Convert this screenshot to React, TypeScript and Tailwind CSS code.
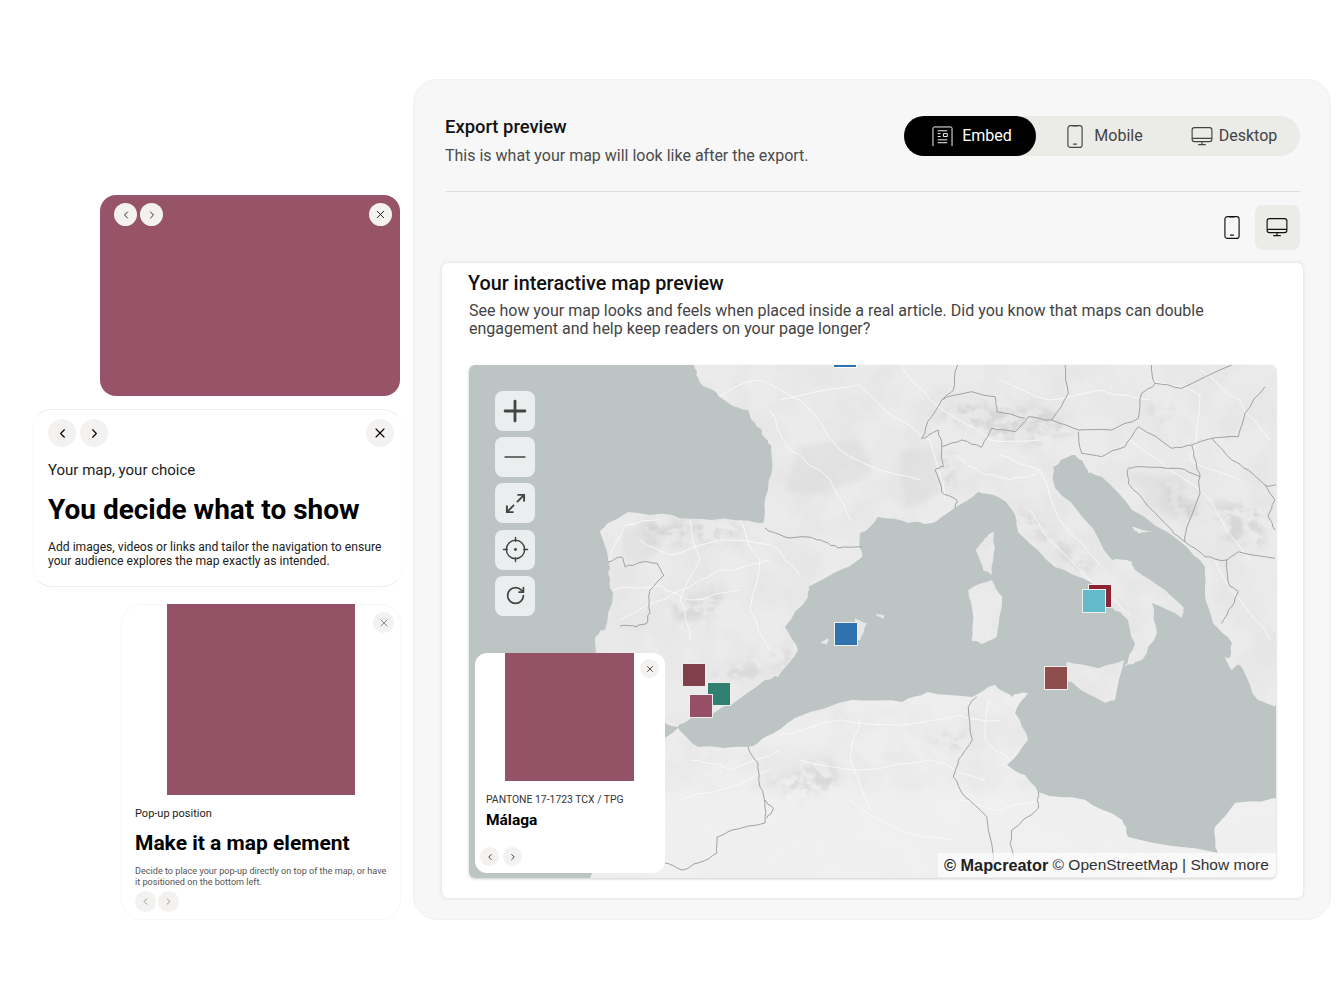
import { ChevronLeft, ChevronRight, X, Plus, Minus, RotateCw } from "lucide-react";

type Pt = [number, number];

// fixed seed so the coast comes out the same every time
function makeRand(seed: number) {
  let s = seed;
  return () => {
    s = (s * 16807) % 2147483647;
    return s / 2147483647 - 0.5;
  };
}

// break each segment up and nudge the new points, gives a natural edge
function rough(pts: Pt[], amp: number, closed: boolean, seed: number) {
  const rand = makeRand(seed);
  let cur = pts;
  for (let pass = 0; pass < 2; pass++) {
    const next: Pt[] = [];
    const n = closed ? cur.length : cur.length - 1;
    for (let i = 0; i < n; i++) {
      const a = cur[i];
      const b = cur[(i + 1) % cur.length];
      next.push(a);
      next.push([(a[0] + b[0]) / 2 + rand() * amp * 2, (a[1] + b[1]) / 2 + rand() * amp * 2]);
    }
    if (!closed) next.push(cur[cur.length - 1]);
    cur = next;
  }
  return cur;
}

function path(pts: Pt[], closed: boolean) {
  const f = (n: number) => n.toFixed(1);
  return `M${pts.map((p) => `${f(p[0])} ${f(p[1])}`).join("L")}${closed ? "Z" : ""}`;
}

const shape = (pts: Pt[], amp = 1.3, seed = 11) => path(rough(pts, amp, true, seed), true);
const stroke = (pts: Pt[], amp = 1.1, seed = 29) => path(rough(pts, amp, false, seed), false);

// z = points read in 3x crop starting at 765,360
const z = (pts: Pt[]): Pt[] => pts.map(([x, y]) => [765 + x / 3, 360 + y / 3]);

const europe: Pt[] = [
  [692, 360], [694, 365], [698, 377], [705, 387], [716, 392], [728, 403], [748, 410], [755, 423], [765, 438],
  [771, 445], [772, 470], [768, 490], [764, 520], [758, 523], [712, 520], [672, 515], [628, 512], [608, 523], [600, 532],
  [608, 557], [608, 573], [613, 593], [605, 630], [595, 640], [595, 660], [620, 700], [665, 723], [678, 727],
  [691, 718], [710, 715], [731, 705], [765, 680], [778, 677], [798, 650], [785, 627], [808, 597], [808, 587],
  [862, 557], [860, 533], [878, 517], [908, 523], [932, 523], [952, 510], [978, 492], [998, 497], [1012, 510],
  [1018, 532], [1055, 567], [1092, 583], [1112, 607], [1128, 620], [1135, 643], [1128, 660], [1122, 668],
  [1142, 660], [1157, 633], [1152, 603], [1182, 618], [1184, 608], [1165, 590], [1135, 570], [1132, 562],
  [1112, 560], [1085, 520], [1055, 488], [1053, 467], [1072, 455], [1082, 460], [1088, 473], [1102, 477],
  [1132, 510], [1182, 543], [1205, 567], [1205, 593], [1213, 623], [1232, 643], [1228, 660], [1242, 667],
  [1258, 700], [1285, 708], [1285, 360],
];
const africa: Pt[] = [
  [678, 728], [698, 747], [748, 747], [765, 737], [795, 718], [852, 700], [902, 702], [928, 692], [972, 697],
  [995, 685], [1012, 697], [1028, 693], [1015, 713], [1028, 740], [1007, 765], [1025, 775], [1038, 792],
  [1085, 800], [1122, 820], [1128, 837], [1218, 853], [1215, 827], [1235, 803], [1285, 798], [1285, 885],
  [585, 885], [590, 878], [620, 800], [650, 745],
];
const islands: Pt[][] = [
  z([[685, 515], [690, 560], [680, 645], [655, 630], [632, 570], [660, 535]]),
  z([[610, 690], [680, 660], [712, 710], [695, 830], [650, 852], [620, 840], [625, 770]]),
  z([[905, 905], [1000, 925], [1078, 900], [1050, 1020], [1020, 1028], [930, 975], [905, 960]]),
  z([[270, 775], [305, 790], [285, 840], [270, 840]]),
  z([[333, 760], [360, 768], [355, 778], [340, 770]]),
  z([[168, 850], [190, 835], [188, 855]]),
  z([[1380, 890], [1430, 900], [1400, 930]]),
  z([[1430, 920], [1530, 900], [1530, 1040], [1480, 1020]]),
  z([[1100, 500], [1170, 515], [1120, 520]]),
];

const borders: Pt[][] = [
  [[765, 528], [785, 537], [808, 537], [825, 542], [838, 548], [862, 547]],
  [[608, 562], [622, 557], [625, 567], [642, 562], [657, 563], [664, 575], [650, 590], [650, 613], [647, 623], [637, 627], [620, 626]],
  z([[578, 15], [565, 90], [530, 120], [500, 170], [470, 235]]),
  z([[470, 235], [520, 210], [530, 260], [590, 240], [650, 262], [680, 205], [750, 215], [790, 170], [860, 180], [940, 210], [1040, 210], [1120, 175], [1130, 100], [1170, 70], [1250, 85], [1400, 15]]),
  z([[530, 260], [535, 320], [510, 330], [530, 395], [575, 420], [570, 445]]),
  z([[530, 120], [620, 95], [690, 110], [695, 155], [780, 175]]),
  z([[940, 215], [950, 280], [1010, 290], [1080, 260], [1120, 200], [1220, 265], [1280, 255], [1295, 320], [1305, 350], [1240, 325], [1130, 320], [1090, 325], [1090, 370], [1150, 440], [1220, 510], [1260, 545]]),
  z([[1280, 255], [1340, 235], [1400, 300], [1450, 330], [1500, 375], [1535, 375]]),
  z([[1305, 350], [1305, 400], [1270, 490], [1260, 545], [1320, 590], [1385, 600], [1395, 680], [1420, 695], [1400, 740], [1370, 790]]),
  z([[1385, 600], [1420, 575], [1530, 595]]),
  z([[1160, 15], [1170, 70]]),
  z([[900, 15], [910, 100], [860, 180]]),
  z([[1500, 80], [1440, 160], [1420, 230], [1340, 235]]),
  z([[1500, 375], [1530, 420], [1510, 470], [1530, 510]]),
  z([[635, 1010], [610, 1040], [622, 1140], [580, 1200], [565, 1250], [600, 1310], [665, 1370], [690, 1530]]),
  z([[820, 1295], [820, 1345], [740, 1410], [735, 1450], [745, 1490]]),
  z([[0, 1320], [25, 1345], [5, 1375]]),
  [[748, 747], [758, 763], [760, 787], [765, 803], [765, 823], [732, 830], [717, 837], [717, 853], [698, 863], [682, 870], [665, 863]],
];

const roads: Pt[][] = [
  [[620, 620], [680, 590], [720, 570], [770, 560]],
  [[640, 540], [670, 555], [720, 540], [770, 545], [800, 575]],
  [[613, 590], [660, 585], [690, 600], [740, 590]],
  [[610, 560], [625, 525], [660, 520]],
  [[690, 520], [700, 560], [680, 600], [690, 640]],
  [[740, 520], [760, 560], [750, 610], [770, 650]],
  [[710, 400], [760, 380], [800, 400], [840, 450], [880, 470], [920, 480]],
  [[780, 400], [860, 385], [900, 420], [930, 440], [945, 500]],
  [[770, 410], [790, 450], [830, 480], [850, 520]],
  [[900, 365], [930, 400], [990, 440], [1040, 440]],
  [[955, 455], [985, 475], [1010, 480], [1040, 470]],
  [[1000, 455], [1040, 470], [1060, 520], [1100, 565]],
  [[1030, 510], [1060, 550], [1100, 590], [1130, 615]],
  [[1150, 380], [1200, 395], [1190, 460], [1240, 480]],
  [[1130, 440], [1170, 470], [1210, 500], [1250, 560]],
  [[1200, 370], [1240, 400], [1270, 440]],
  [[1215, 560], [1240, 600], [1270, 640]],
  [[1000, 380], [1050, 400], [1100, 390], [1150, 400]],
  [[780, 735], [840, 720], [900, 725], [960, 715], [1000, 720]],
  [[800, 760], [860, 770], [930, 760], [985, 780]],
  [[850, 800], [900, 830], [950, 840]],
  [[690, 760], [730, 770], [780, 750]],
  [[680, 800], [720, 790], [770, 770]],
  [[860, 720], [850, 760], [870, 810]],
  [[990, 700], [985, 740], [1010, 760]],
  [[960, 800], [1000, 810], [1040, 800]],
];

// soft relief shading, only the mountain parts
const mountains: Pt[][] = [
  z([[500, 170], [590, 190], [700, 240], [820, 250], [930, 220], [860, 150], [720, 130], [600, 130]]),
  z([[1130, 120], [1230, 150], [1190, 190]]),
  z([[520, 260], [570, 290], [560, 380], [530, 380]]),
  z([[1190, 360], [1280, 400], [1300, 480], [1220, 470]]),
  z([[1340, 420], [1500, 440], [1500, 560], [1380, 540]]),
  z([[760, 420], [860, 530], [1000, 620], [950, 640], [780, 500]]),
  z([[480, 1130], [620, 1120], [580, 1170]]),
  [[670, 605], [720, 590], [725, 610], [680, 625]],
  [[760, 665], [790, 640], [790, 665]],
  [[640, 520], [740, 525], [740, 540], [650, 545]],
  [[700, 680], [760, 660], [760, 680]],
  [[770, 780], [830, 760], [840, 790], [790, 810]],
];

const patches: Pt[][] = [
  z([[100, 260], [280, 240], [320, 340], [180, 410], [60, 390]]),
  z([[400, 280], [500, 260], [520, 400], [420, 450]]),
  z([[1090, 340], [1250, 350], [1290, 470], [1180, 450]]),
  [[620, 530], [680, 525], [650, 560], [625, 560]],
];

function MapBase() {
  const landPath = shape(europe, 1.6, 17);
  const africaPath = shape(africa, 1.4, 41);
  const islandPaths = islands.map((p, i) => shape(p, 0.9, 60 + i));

  return (
    <svg viewBox="469 365 807 513" className="block h-full w-full" fill="none">
      <defs>
        <filter id="soft" x="-30%" y="-30%" width="160%" height="160%">
          <feGaussianBlur stdDeviation="5" />
        </filter>
        <filter id="softer" x="-30%" y="-30%" width="160%" height="160%">
          <feGaussianBlur stdDeviation="2.5" />
        </filter>
        <filter id="terrain" x="0" y="0" width="100%" height="100%">
          <feTurbulence type="fractalNoise" baseFrequency="0.028" numOctaves="4" seed="7" />
          <feColorMatrix values="0 0 0 0 0.68  0 0 0 0 0.68  0 0 0 0 0.68  3.2 0 0 0 -1.3" />
        </filter>
        <filter id="ridges" x="0" y="0" width="100%" height="100%">
          <feTurbulence type="fractalNoise" baseFrequency="0.07 0.09" numOctaves="3" seed="3" />
          <feColorMatrix values="0 0 0 0 0.55  0 0 0 0 0.55  0 0 0 0 0.55  5 0 0 0 -2.1" />
        </filter>
        <clipPath id="land">
          <path d={landPath} />
          <path d={africaPath} />
          {islandPaths.map((d, i) => (
            <path key={i} d={d} />
          ))}
        </clipPath>
        <mask id="high">
          {mountains.map((p, i) => (
            <path key={i} d={shape(p, 1, 90 + i)} fill="#fff" filter="url(#soft)" />
          ))}
        </mask>
      </defs>
      <rect x="469" y="365" width="807" height="513" fill="#bcc4c4" />
      <path d={landPath} fill="#ebebeb" />
      <path d={africaPath} fill="#eeeeee" />
      {islandPaths.map((d, i) => (
        <path key={i} d={d} fill="#ebebeb" />
      ))}
      <g clipPath="url(#land)">
        {patches.map((p, i) => (
          <path key={i} d={shape(p, 2, 70 + i)} fill="#e3e3e3" filter="url(#softer)" />
        ))}
        <rect x="469" y="365" width="807" height="513" filter="url(#terrain)" opacity="0.24" />
        <g mask="url(#high)">
          <rect x="469" y="365" width="807" height="513" filter="url(#ridges)" opacity="0.45" />
        </g>
        <rect x="590" y="790" width="690" height="90" fill="#f1f1f1" opacity="0.7" filter="url(#soft)" />
        {roads.map((p, i) => (
          <path key={i} d={stroke(p, 2.2, 200 + i)} stroke="#f9f9f9" strokeWidth="0.9" />
        ))}
      </g>
      {borders.map((p, i) => (
        <path key={i} d={stroke(p, 1.1, 300 + i)} stroke="#a0a2a2" strokeWidth="1" strokeLinejoin="round" />
      ))}
    </svg>
  );
}

function PhoneIcon({ className }: { className?: string }) {
  return (
    <svg viewBox="0 0 16 24" className={className} fill="none" stroke="currentColor" strokeWidth="1.2">
      <rect x="0.6" y="0.6" width="14.8" height="22.8" rx="2.6" />
      <path d="M5.5 1h5M6 20h4" />
    </svg>
  );
}

function DesktopIcon({ className }: { className?: string }) {
  return (
    <svg viewBox="0 0 22 20" className={className} fill="none" stroke="currentColor" strokeWidth="1.2">
      <rect x="0.6" y="0.6" width="20.8" height="14.8" rx="2.4" />
      <path d="M0.6 12h20.8M11 15.5v3M7 18.6h8" />
    </svg>
  );
}

function EmbedIcon() {
  return (
    <svg viewBox="0 0 22 22" className="h-[21px] w-[21px]" fill="none" stroke="currentColor" strokeWidth="1">
      <path d="M1 21V2.5A1.5 1.5 0 0 1 2.500 1h17A1.500 1.500 0 0 1 21 2.500V21" />
      <path d="M6 5h10M6 8h3M6 11h3M12 8h4v3h-4zM6 14.500h10M6 17.500h10" />
    </svg>
  );
}

function LocateIcon() {
  return (
    <svg viewBox="0 0 28 28" className="h-[27px] w-[27px]" fill="none" stroke="#444" strokeWidth="1.500" strokeLinecap="round">
      <circle cx="14" cy="14" r="9.500" />
      <circle cx="14" cy="14" r="1.500" fill="#444" stroke="none" />
      <path d="M14 1.500v4M14 22.500v4M1.500 14h4M22.500 14h4" />
    </svg>
  );
}

function ExpandIcon() {
  return (
    <svg viewBox="0 0 22 22" className="h-[21px] w-[21px]" fill="none" stroke="#444" strokeWidth="2">
      <path d="M13 2h7v7M20 2l-7.500 7.500M9 20H2v-7M2 20l7.500-7.500" />
    </svg>
  );
}

function RoundBtn({
  size,
  icon,
  className = "",
}: {
  size: string;
  icon: React.ReactNode;
  className?: string;
}) {
  return <div className={`flex items-center justify-center rounded-full ${size} ${className}`}>{icon}</div>;
}

const mapControls = [
  <Plus key="plus" size={34} color="#444" strokeWidth={2.8} absoluteStrokeWidth />,
  <Minus key="minus" size={34} color="#444" strokeWidth={1.6} absoluteStrokeWidth />,
  <ExpandIcon key="expand" />,
  <LocateIcon key="locate" />,
  <RotateCw key="reset" size={21} color="#444" strokeWidth={2} />,
];

const markers = [
  { pos: "left-[213px] top-[298px]", color: "bg-[#7f3f4b]" },
  { pos: "left-[238px] top-[317px]", color: "bg-[#2f8070]" },
  { pos: "left-[220px] top-[329px]", color: "bg-[#955068]" },
  { pos: "left-[365px] top-[257px]", color: "bg-[#2f72ae]" },
  { pos: "left-[619px] top-[219px]", color: "bg-[#8c2433]" },
  { pos: "left-[613px] top-[224px]", color: "bg-[#63bbca]" },
  { pos: "left-[575px] top-[301px]", color: "bg-[#8e4f4c]" },
];

export default function App() {
  return (
    <div className="flex h-[1000px] w-[1342px] bg-white pt-[79px] font-['Roboto',sans-serif] text-black">
      {/* Left column: pop-up variations */}
      <div className="flex w-[413px] shrink-0 flex-col items-end pt-[116px]">
        <div className="relative mr-[13px] h-[201px] w-[300px] rounded-2xl bg-[#975368]">
          <div className="absolute left-[14px] top-[8px] flex gap-[3px]">
            <RoundBtn size="h-[23px] w-[23px]" className="bg-[#f3f2f0]" icon={<ChevronLeft size={12} strokeWidth={1.6} />} />
            <RoundBtn size="h-[23px] w-[23px]" className="bg-[#f3f2f0]" icon={<ChevronRight size={12} strokeWidth={1.6} />} />
          </div>
          <RoundBtn
            size="h-[23px] w-[23px]"
            className="absolute right-[8px] top-[8px] bg-[#f3f2f0]"
            icon={<X size={13} strokeWidth={1.5} />}
          />
        </div>

        <div className="mr-[10px] mt-[13px] h-[178px] w-[371px] rounded-[20px] border border-x-[#fbfbfb] border-y-[#eeeeee] bg-white pl-[15px] pr-[8px] pt-[9px]">
          <div className="flex items-center justify-between">
            <div className="flex gap-1">
              <RoundBtn size="h-7 w-7" className="bg-[#f3f2f0]" icon={<ChevronLeft size={15} strokeWidth={1.8} />} />
              <RoundBtn size="h-7 w-7" className="bg-[#f3f2f0]" icon={<ChevronRight size={15} strokeWidth={1.8} />} />
            </div>
            <RoundBtn size="h-7 w-7" className="bg-[#f3f2f0]" icon={<X size={16} strokeWidth={1.6} />} />
          </div>
          <p className="mt-[15px] text-[15px] leading-[17px] text-[#1c1c1c]">Your map, your choice</p>
          <h2 className="mt-[14px] text-[28px] font-bold leading-[33px]">You decide what to show</h2>
          <p className="mt-[14px] text-[12.15px] leading-[14px] text-[#222]">
            Add images, videos or links and tailor the navigation to ensure
            <br />
            your audience explores the map exactly as intended.
          </p>
        </div>

        <div className="relative mr-[12px] mt-[17px] h-[316px] w-[280px] rounded-[20px] border border-[#f7f7f7] bg-white px-[13px]">
          <div className="-mt-px ml-[32px] h-[191px] w-[188px] bg-[#945267]" />
          <RoundBtn
            size="h-[21px] w-[21px]"
            className="absolute right-[6px] top-[7px] bg-[#f3f2f0]"
            icon={<X size={12} strokeWidth={1.4} color="#555" />}
          />
          <p className="mt-[12px] text-[11px] leading-[13px] text-[#222]">Pop-up position</p>
          <h3 className="mt-[11px] text-[21px] font-bold leading-[25px]">Make it a map element</h3>
          <p className="mt-[10px] whitespace-nowrap text-[9.1px] leading-[11px] text-[#555]">
            Decide to place your pop-up directly on top of the map, or have
            <br />
            it positioned on the bottom left.
          </p>
          <div className="mt-[3px] flex gap-[2px]">
            <RoundBtn size="h-[21px] w-[21px]" className="bg-[#f3f2f0]" icon={<ChevronLeft size={11} strokeWidth={1.4} color="#666" />} />
            <RoundBtn size="h-[21px] w-[21px]" className="bg-[#f3f2f0]" icon={<ChevronRight size={11} strokeWidth={1.4} color="#666" />} />
          </div>
        </div>
      </div>

      {/* Export preview panel */}
      <div className="h-[841px] w-[918px] shrink-0 rounded-[24px] border border-[#f2f2f2] bg-[#f7f7f7] pl-[31px] pr-[30px] pt-[36px]">
        <div className="flex h-[76px] items-start justify-between border-b border-[#e0e0e0]">
          <div>
            <h1 className="text-[18.4px] font-medium leading-[22px] text-[#111]">Export preview</h1>
            <p className="mt-[8px] text-base leading-[19px] text-[#4b4b4b]">
              This is what your map will look like after the export.
            </p>
          </div>
          <div className="flex h-10 w-[396px] items-center rounded-full bg-[#ebebe7] text-base text-[#444]">
            <div className="flex h-10 w-[132px] items-center justify-center gap-[9px] rounded-full bg-black pl-[4px] text-white">
              <EmbedIcon />
              <span>Embed</span>
            </div>
            <div className="flex w-[132px] items-center justify-center gap-[11px] pl-[6px]">
              <PhoneIcon className="h-[23px] w-[16px]" />
              <span>Mobile</span>
            </div>
            <div className="flex w-[132px] items-center justify-center gap-[6px]">
              <DesktopIcon className="h-[19px] w-[22px]" />
              <span>Desktop</span>
            </div>
          </div>
        </div>

        <div className="mt-[13px] flex items-center justify-end gap-[15px]">
          <PhoneIcon className="h-[23px] w-[16px] text-[#111]" />
          <div className="flex h-[45px] w-[45px] items-center justify-center rounded-lg bg-[#ebebe7] pr-[1px]">
            <DesktopIcon className="h-[19px] w-[22px] text-[#111]" />
          </div>
        </div>

        {/* Article card */}
        <div className="-ml-[3px] mt-[13px] h-[635px] w-[861px] rounded-md bg-white pl-[26px] pt-[9px] shadow-[0_0_4px_rgba(0,0,0,0.12)]">
          <h2 className="text-[19.8px] font-medium leading-[24px] text-[#111]">Your interactive map preview</h2>
          <p className="ml-px mt-[5.500px] w-[790px] text-base leading-[18.500px] text-[#444]">
            See how your map looks and feels when placed inside a real article. Did you know that maps can double
            engagement and help keep readers on your page longer?
          </p>

          <div className="relative ml-px mt-[26.500px] h-[513px] w-[807px] overflow-hidden rounded-md shadow-[0_1px_3px_rgba(0,0,0,0.2)]">
            <MapBase />

            <div className="absolute left-[26px] top-[26px] flex flex-col gap-[6.200px]">
              {mapControls.map((icon, i) => (
                <div key={i} className="flex h-10 w-10 items-center justify-center rounded-lg bg-[#ebeeee]">
                  {icon}
                </div>
              ))}
            </div>

            <div className="absolute left-[364px] top-[-5px] h-2 w-6 border border-white bg-[#2f72ae]" />
            {markers.map((m, i) => (
              <div key={i} className={`absolute h-6 w-6 border border-[#eeeeee] ${m.pos} ${m.color}`} />
            ))}

            {/* Pop-up on the map */}
            <div className="absolute bottom-[5px] left-[6px] h-[220px] w-[190px] rounded-xl bg-white">
              <div className="ml-[30px] h-[128px] w-[129px] bg-[#945267]" />
              <RoundBtn
                size="h-[19px] w-[19px]"
                className="absolute right-[6px] top-[6px] bg-[#f3f2f0]"
                icon={<X size={10} strokeWidth={1.6} />}
              />
              <p className="ml-[11px] mt-[13px] text-[10.4px] leading-[12px] text-[#333]">PANTONE 17-1723 TCX / TPG</p>
              <p className="ml-[11px] mt-[5px] text-[15.5px] font-bold leading-[19px]">Málaga</p>
              <div className="absolute bottom-[7px] left-[5px] flex gap-1">
                <RoundBtn size="h-[19px] w-[19px]" className="bg-[#f3f2f0]" icon={<ChevronLeft size={10} strokeWidth={1.8} />} />
                <RoundBtn size="h-[19px] w-[19px]" className="bg-[#f3f2f0]" icon={<ChevronRight size={10} strokeWidth={1.8} />} />
              </div>
            </div>

            <div className="absolute bottom-px right-0 flex h-6 w-[338px] items-center bg-white/65 pl-[6px] font-['Liberation_Sans',sans-serif] text-[15.5px] text-[#333]">
              <b className="text-[16.3px] text-[#222]">© Mapcreator</b>
              <span>&nbsp;© OpenStreetMap | Show more</span>
            </div>
          </div>
        </div>
      </div>
    </div>
  );
}
